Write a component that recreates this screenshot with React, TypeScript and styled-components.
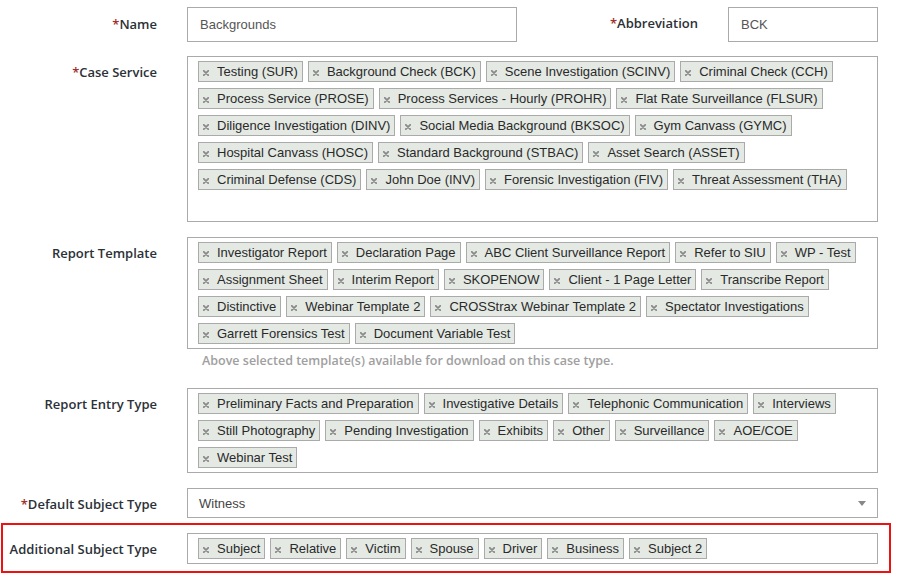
import React from 'react';
import styled, { createGlobalStyle } from 'styled-components';

const GlobalStyle = createGlobalStyle`
  body {
    margin: 0;
    background: #fff;
    font-family: "Liberation Sans", Arial, sans-serif;
  }
`;

const Form = styled.div`
  width: 898px;
  box-sizing: border-box;
  padding: 7px 20px 4px 0;
  display: flex;
  flex-direction: column;
`;

const Row = styled.div<{ $mt?: number }>`
  display: flex;
  align-items: flex-start;
  margin-top: ${p => p.$mt ?? 0}px;
`;

const Label = styled.div<{ $pt?: number }>`
  width: 157px;
  flex: none;
  text-align: right;
  font-family: "Open Sans", sans-serif;
  font-weight: 600;
  font-size: 13px;
  line-height: 18px;
  color: #2b3137;
  padding-top: ${p => p.$pt ?? 0}px;
  margin-right: 30px;
`;

const Req = styled.span`
  color: #a0302c;
`;

const Field = styled.div`
  flex: 1;
  min-width: 0;
`;

const TextInput = styled.div<{ $w?: number }>`
  width: ${p => (p.$w ? `${p.$w}px` : 'auto')};
  height: 35px;
  box-sizing: border-box;
  border: 1px solid #aaa;
  padding: 0 12px;
  display: flex;
  align-items: center;
  font-size: 13px;
  color: #555;
`;

const Spacer = styled.div`
  flex: 1;
`;

const TagBox = styled.div<{ $minH?: number }>`
  box-sizing: border-box;
  min-height: ${p => p.$minH ?? 0}px;
  border: 1px solid #aaa;
  padding: 4px 10px 4px;
  display: flex;
  flex-wrap: wrap;
  align-content: flex-start;
  gap: 6px 5px;
`;

const Tag = styled.div`
  height: 21px;
  box-sizing: border-box;
  border: 1px solid #aaa;
  background: #e4e9e4;
  padding: 0 4px 0 4px;
  display: flex;
  align-items: center;
  font-size: 13px;
  line-height: 19px;
  color: #2a2a2a;
  white-space: nowrap;
`;

const Remove = styled.svg`
  width: 6px;
  height: 6px;
  margin: 2px 8px 0 0;
  flex: none;
`;

const Help = styled.div`
  font-family: "Open Sans", sans-serif;
  font-weight: 600;
  font-size: 12.5px;
  color: #a0a0a0;
  margin: 3px 0 0 15px;
  line-height: 18px;
`;

const Select = styled.div`
  height: 30px;
  box-sizing: border-box;
  border: 1px solid #aaa;
  padding: 0 11px;
  display: flex;
  align-items: center;
  justify-content: space-between;
  font-size: 13px;
  color: #444;
`;

const Highlight = styled.div`
  margin: 5px -13px 0 1px;
  border: 2px solid #ee1111;
  padding: 8px 11px 7px 0;
`;

const Inner = styled.div`
  display: flex;
  align-items: flex-start;
  margin-left: -3px;
`;

const X = () => (
  <Remove viewBox="0 0 6 6">
    <path d="M0.8 0.8 L5.2 5.2 M5.2 0.8 L0.8 5.2" stroke="#8a8a8a" strokeWidth="1.8" strokeLinecap="round" />
  </Remove>
);

const Tags = ({ items }: { items: string[] }) => (
  <>
    {items.map(t => (
      <Tag key={t}>
        <X />
        {t}
      </Tag>
    ))}
  </>
);

const caseServices = [
  'Testing (SUR)', 'Background Check (BCK)', 'Scene Investigation (SCINV)', 'Criminal Check (CCH)',
  'Process Service (PROSE)', 'Process Services - Hourly (PROHR)', 'Flat Rate Surveillance (FLSUR)',
  'Diligence Investigation (DINV)', 'Social Media Background (BKSOC)', 'Gym Canvass (GYMC)',
  'Hospital Canvass (HOSC)', 'Standard Background (STBAC)', 'Asset Search (ASSET)',
  'Criminal Defense (CDS)', 'John Doe (INV)', 'Forensic Investigation (FIV)', 'Threat Assessment (THA)',
];

const templates = [
  'Investigator Report', 'Declaration Page', 'ABC Client Surveillance Report', 'Refer to SIU', 'WP - Test',
  'Assignment Sheet', 'Interim Report', 'SKOPENOW', 'Client - 1 Page Letter', 'Transcribe Report',
  'Distinctive', 'Webinar Template 2', 'CROSStrax Webinar Template 2', 'Spectator Investigations',
  'Garrett Forensics Test', 'Document Variable Test',
];

const entryTypes = [
  'Preliminary Facts and Preparation', 'Investigative Details', 'Telephonic Communication', 'Interviews',
  'Still Photography', 'Pending Investigation', 'Exhibits', 'Other', 'Surveillance', 'AOE/COE',
  'Webinar Test',
];

const subjectTypes = ['Subject', 'Relative', 'Victim', 'Spouse', 'Driver', 'Business', 'Subject 2'];

export default function App() {
  return (
    <>
      <GlobalStyle />
      <Form>
        <Row>
          <Label $pt={8}><Req>*</Req>Name</Label>
          <TextInput $w={330}>Backgrounds</TextInput>
          <Spacer />
          <Label $pt={7}><Req>*</Req>Abbreviation</Label>
          <TextInput $w={150}>BCK</TextInput>
        </Row>

        <Row $mt={14}>
          <Label $pt={7}><Req>*</Req>Case Service</Label>
          <Field>
            <TagBox $minH={166}>
              <Tags items={caseServices} />
            </TagBox>
          </Field>
        </Row>

        <Row $mt={15}>
          <Label $pt={7}>Report Template</Label>
          <Field>
            <TagBox>
              <Tags items={templates} />
            </TagBox>
            <Help>Above selected template(s) available for download on this case type.</Help>
          </Field>
        </Row>

        <Row $mt={18}>
          <Label $pt={7}>Report Entry Type</Label>
          <Field>
            <TagBox>
              <Tags items={entryTypes} />
            </TagBox>
          </Field>
        </Row>

        <Row $mt={15}>
          <Label $pt={7}><Req>*</Req>Default Subject Type</Label>
          <Field>
            <Select>
              Witness
              <svg width="8" height="5" viewBox="0 0 8 5">
                <path d="M0 0 L8 0 L4 5 Z" fill="#888" />
              </svg>
            </Select>
          </Field>
        </Row>

        <Highlight>
          <Inner>
            <Label $pt={7}>Additional Subject Type</Label>
            <Field>
              <TagBox>
                <Tags items={subjectTypes} />
              </TagBox>
            </Field>
          </Inner>
        </Highlight>
      </Form>
    </>
  );
}
